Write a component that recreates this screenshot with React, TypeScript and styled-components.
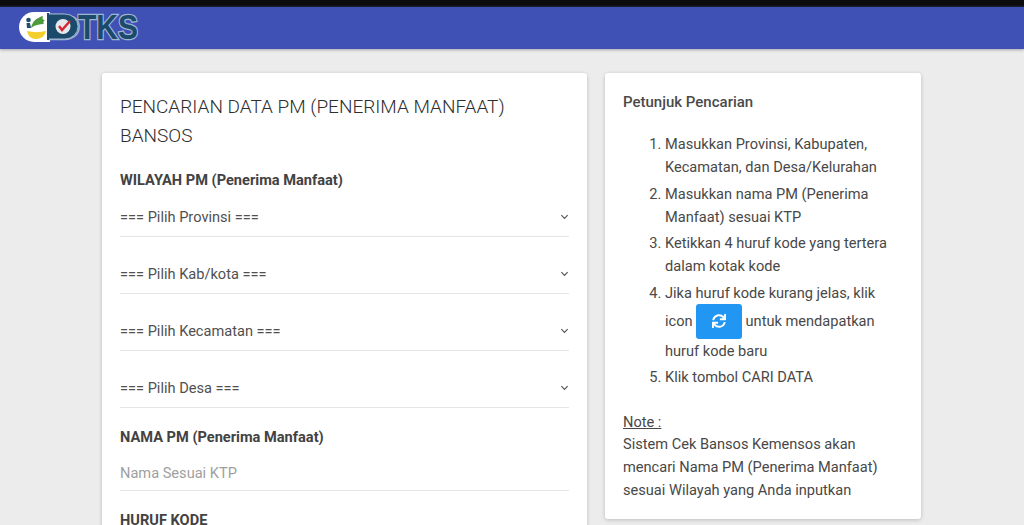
import React from "react";
import styled, { createGlobalStyle } from "styled-components";
import { FaSync } from "react-icons/fa";

const Global = createGlobalStyle`
  html, body { margin: 0; padding: 0; height: 525px; overflow: hidden; background: #ececec; }
  body { font-family: Roboto, "Liberation Sans", sans-serif; color: #424242; }
`;
const Page = styled.div`height: 525px; overflow: hidden; display: flex; flex-direction: column;`;
const TopStrip = styled.div`height: 7px; background: linear-gradient(#0c0c0e 70%, #20233c); flex: none;`;
const Header = styled.header`
  height: 42px; flex: none; background: #3f51b5; display: flex; align-items: flex-start;
  padding-left: 18px; box-shadow: 0 1px 3px rgba(0,0,0,.3);
`;
const Logo = styled.svg`width: 122px; height: 36px; display: block; margin-top: 3px; overflow: visible;`;
const Content = styled.main`display: flex; align-items: flex-start; gap: 18px; padding: 24px 0 0 102px;`;
const Card = styled.section`
  background: #fff; border-radius: 3px; box-shadow: 0 1px 4px rgba(0,0,0,.2); box-sizing: border-box;
`;
const FormCard = styled(Card)`width: 485px; height: 600px; padding: 19px 18px 0;`;
const HelpCard = styled(Card)`width: 316px; height: 446px; padding: 19px 18px 0;`;
const Title = styled.h1`
  margin: 0; font-size: 19px; line-height: 29px; font-weight: 300; color: #2e2e2e;
`;
const FieldLabel = styled.div`font-size: 14.6px; line-height: 20px; font-weight: 700; color: #424242;`;
const RegionLabel = styled(FieldLabel)`margin-top: 20px;`;
const NameLabel = styled(FieldLabel)`margin-top: 19px;`;
const CodeLabel = styled(FieldLabel)`margin-top: 19px;`;
const SelectRow = styled.div`
  height: 46px; margin-bottom: 10px; border-bottom: 1px solid #e6e6e6; display: flex; align-items: center;
  justify-content: space-between; font-size: 14.6px; color: #505050;
  & > span { margin-top: 8px; }
`;
const Selects = styled.div`& > :last-child { margin-bottom: 0; }`;
const Chevron = styled.svg`width: 9px; height: 9px; display: block; margin-top: 6px;`;
const NameInput = styled.div`
  height: 44px; box-sizing: border-box; padding-top: 9px; border-bottom: 1px solid #e6e6e6; display: flex; align-items: center;
  font-size: 14.6px; color: #a0a0a0;
`;
const HelpTitle = styled.h2`margin: 0; font-size: 15px; line-height: 20px; font-weight: 500; color: #4a4a4a;`;
const Steps = styled.ol`
  margin: 21px 0 0; padding: 0 0 0 42px; font-size: 14.6px; line-height: 23px; color: #484848;
`;
const Step = styled.li`margin-bottom: 3.6px; padding-right: 10px;`;
const InlineRow = styled.span`display: flex; align-items: center; gap: 3px; height: 35px; margin: -1px 0 1px; white-space: nowrap;`;
const RefreshButton = styled.span`
  display: inline-flex; width: 46px; height: 35px; border-radius: 3px; background: #2196f3; color: #fff;
  align-items: center; justify-content: center; margin-right: 1px; flex: none;
`;
const NoteBlock = styled.div`margin: 22px 0 0; font-size: 14.6px; line-height: 23px; color: #484848;`;
const NoteHead = styled.div`line-height: 22px; & > span { text-decoration: underline; }`;

const Select = ({ label }: { label: string }) => (
  <SelectRow>
    <span>{label}</span>
    <Chevron viewBox="0 0 10 10"><path d="M1.500 3.500 5 7l3.500-3.500" fill="none" stroke="#555" strokeWidth="1.300" /></Chevron>
  </SelectRow>
);

export default function App() {
  return (
    <Page>
      <Global />
      <TopStrip />
      <Header>
        <Logo viewBox="0 0 122 36">
          <path d="M16 2h16v30H16a15 15 0 0 1 0-30z" fill="#fff" />
          <path d="M9 21c6 1.500 13 1.500 19 0-1 5-5 8-10 8s-8-3-9-8z" fill="#f2cf2a" />
          <path d="M13 18c1-6 5-10 12-12-1 3 0 4 2 4-2 1.500-2 3-1 4-5 0-9 1-13 4z" fill="#4c9a3c" />
          <circle cx="10.500" cy="10" r="2.300" fill="#1f4e6b" />
          <path d="M8.500 13h3.500l1 5H9z" fill="#1f4e6b" />
          <text y="29" fontFamily="Liberation Sans, sans-serif" fontSize="35" fontWeight="700" fill="#1b4a6b" stroke="#9db5d2" strokeWidth="2.600" paintOrder="stroke">
            <tspan x="29" textLength="33" lengthAdjust="spacingAndGlyphs">D</tspan>
            <tspan x="60" textLength="60" lengthAdjust="spacingAndGlyphs">TKS</tspan>
          </text>
          <path d="M30 4h17a13 12.500 0 0 1 0 25H30z" fill="#1b4a6b" stroke="#9db5d2" strokeWidth="1" />
          <path d="M29 3h2v27h-2z" fill="#1b4a6b" />
          <circle cx="45" cy="16.500" r="7.500" fill="#e4e9ee" />
          <path d="M41 16l3 4 8-9" fill="none" stroke="#d8262f" strokeWidth="2.400" />
        </Logo>
      </Header>
      <Content>
        <FormCard>
          <Title>PENCARIAN DATA PM (PENERIMA MANFAAT) BANSOS</Title>
          <RegionLabel>WILAYAH PM (Penerima Manfaat)</RegionLabel>
          <Selects>
            <Select label="=== Pilih Provinsi ===" />
            <Select label="=== Pilih Kab/kota ===" />
            <Select label="=== Pilih Kecamatan ===" />
            <Select label="=== Pilih Desa ===" />
          </Selects>
          <NameLabel>NAMA PM (Penerima Manfaat)</NameLabel>
          <NameInput>Nama Sesuai KTP</NameInput>
          <CodeLabel>HURUF KODE</CodeLabel>
        </FormCard>
        <HelpCard>
          <HelpTitle>Petunjuk Pencarian</HelpTitle>
          <Steps>
            <Step>Masukkan Provinsi, Kabupaten, Kecamatan, dan Desa/Kelurahan</Step>
            <Step>Masukkan nama PM (Penerima Manfaat) sesuai KTP</Step>
            <Step>Ketikkan 4 huruf kode yang tertera dalam kotak kode</Step>
            <Step>
              Jika huruf kode kurang jelas, klik
              <InlineRow>
                icon
                <RefreshButton><FaSync size={14} /></RefreshButton>
                untuk mendapatkan
              </InlineRow>
              huruf kode baru
            </Step>
            <Step>Klik tombol CARI DATA</Step>
          </Steps>
          <NoteBlock>
            <NoteHead><span>Note :</span></NoteHead>
            Sistem Cek Bansos Kemensos akan mencari Nama PM (Penerima Manfaat) sesuai Wilayah yang Anda inputkan
          </NoteBlock>
        </HelpCard>
      </Content>
    </Page>
  );
}
